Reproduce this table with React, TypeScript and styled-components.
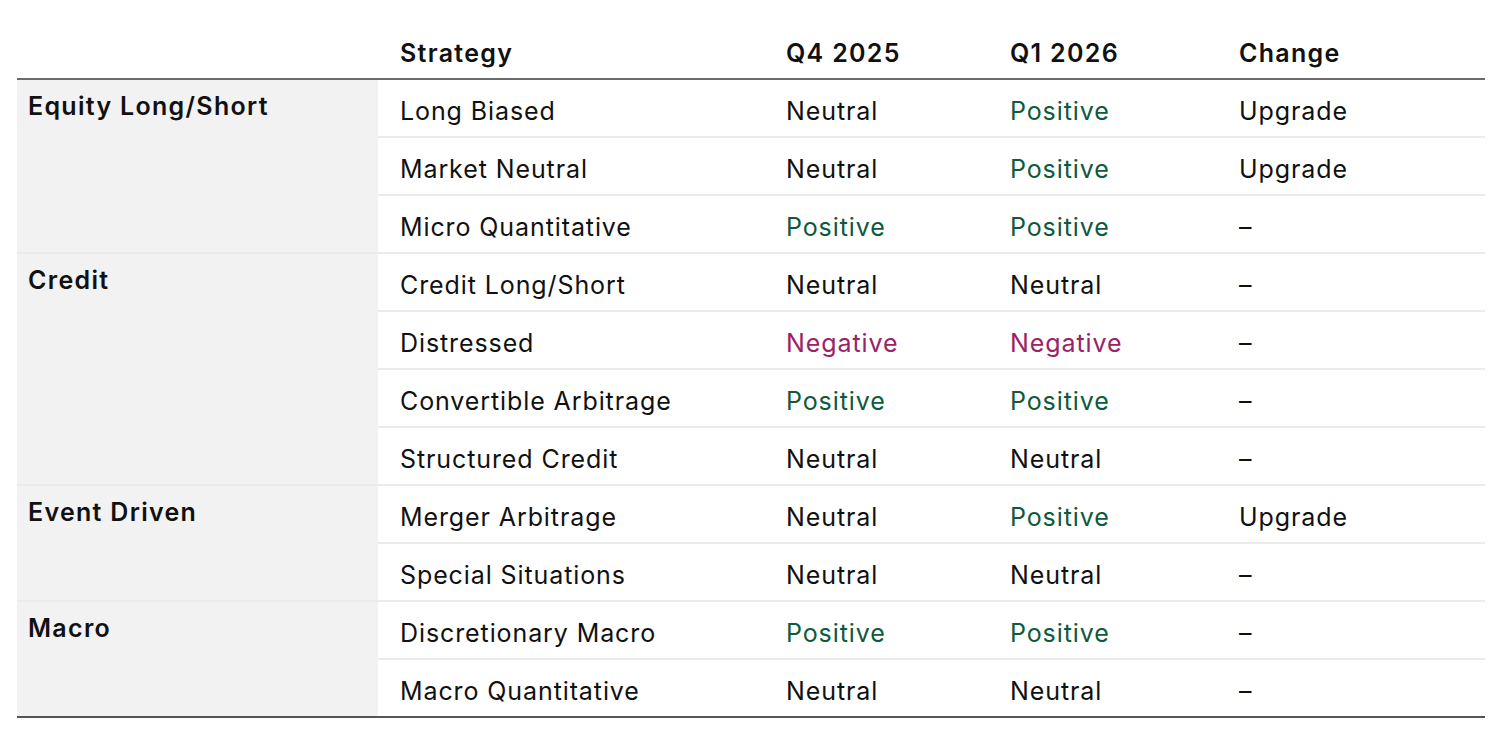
import React from "react";
import styled, { createGlobalStyle } from "styled-components";

const Global = createGlobalStyle`
  html, body { margin: 0; padding: 0; background: #fff; }
  body { font-family: Inter, Roboto, "Liberation Sans", Arial, sans-serif; color: #111; }
`;

const Page = styled.div`
  padding: 0 15px 0 17px;
  width: 1500px;
  box-sizing: border-box;
`;

const Table = styled.table`
  width: 1468px;
  border-collapse: collapse;
  table-layout: fixed;
  font-size: 25px;
  letter-spacing: 0.9px;
  border-bottom: 2px solid #555;
`;

const HeadCell = styled.th`
  text-align: left;
  font-weight: 600;
  font-size: 25px;
  letter-spacing: 1.3px;
  height: 68px;
  vertical-align: bottom;
  padding: 0 22px 10px;
  border-bottom: 2px solid #6b6b6b;
  color: #111;
`;

const GroupCell = styled.td<{ $first?: boolean }>`
  background: #f2f2f2;
  vertical-align: top;
  padding: 10px 11px 0;
  font-weight: 600;
  font-size: 25px;
  letter-spacing: 1.3px;
  line-height: 32px;
  border-top: ${(p) => (p.$first ? "none" : "2px solid #ebebeb")};
`;

const Cell = styled.td<{ $tone?: string; $first?: boolean }>`
  height: 51px;
  padding: 5px 22px 0;
  vertical-align: middle;
  color: ${(p) => (p.$tone === "Positive" ? "#0e5a3b" : p.$tone === "Negative" ? "#9c2167" : "#111")};
  border-top: ${(p) => (p.$first ? "none" : "2px solid #ebebeb")};
  white-space: nowrap;
`;

type Row = [string, string, string, string];
const groups: { name: string; rows: Row[] }[] = [
  {
    name: "Equity Long/Short",
    rows: [
      ["Long Biased", "Neutral", "Positive", "Upgrade"],
      ["Market Neutral", "Neutral", "Positive", "Upgrade"],
      ["Micro Quantitative", "Positive", "Positive", "–"],
    ],
  },
  {
    name: "Credit",
    rows: [
      ["Credit Long/Short", "Neutral", "Neutral", "–"],
      ["Distressed", "Negative", "Negative", "–"],
      ["Convertible Arbitrage", "Positive", "Positive", "–"],
      ["Structured Credit", "Neutral", "Neutral", "–"],
    ],
  },
  {
    name: "Event Driven",
    rows: [
      ["Merger Arbitrage", "Neutral", "Positive", "Upgrade"],
      ["Special Situations", "Neutral", "Neutral", "–"],
    ],
  },
  {
    name: "Macro",
    rows: [
      ["Discretionary Macro", "Positive", "Positive", "–"],
      ["Macro Quantitative", "Neutral", "Neutral", "–"],
    ],
  },
];

export default function App() {
  return (
    <Page>
      <Global />
      <Table>
        <colgroup>
          <col style={{ width: 361 }} />
          <col style={{ width: 386 }} />
          <col style={{ width: 224 }} />
          <col style={{ width: 229 }} />
          <col style={{ width: 268 }} />
        </colgroup>
        <thead>
          <tr>
            <HeadCell />
            <HeadCell>Strategy</HeadCell>
            <HeadCell>Q4 2025</HeadCell>
            <HeadCell>Q1 2026</HeadCell>
            <HeadCell>Change</HeadCell>
          </tr>
        </thead>
        <tbody>
          {groups.map((g, gi) =>
            g.rows.map((r, ri) => (
              <tr key={g.name + ri}>
                {ri === 0 && (
                  <GroupCell rowSpan={g.rows.length} $first={gi === 0}>
                    {g.name}
                  </GroupCell>
                )}
                <Cell $first={gi === 0 && ri === 0}>{r[0]}</Cell>
                <Cell $first={gi === 0 && ri === 0} $tone={r[1]}>{r[1]}</Cell>
                <Cell $first={gi === 0 && ri === 0} $tone={r[2]}>{r[2]}</Cell>
                <Cell $first={gi === 0 && ri === 0}>{r[3]}</Cell>
              </tr>
            ))
          )}
        </tbody>
      </Table>
    </Page>
  );
}
